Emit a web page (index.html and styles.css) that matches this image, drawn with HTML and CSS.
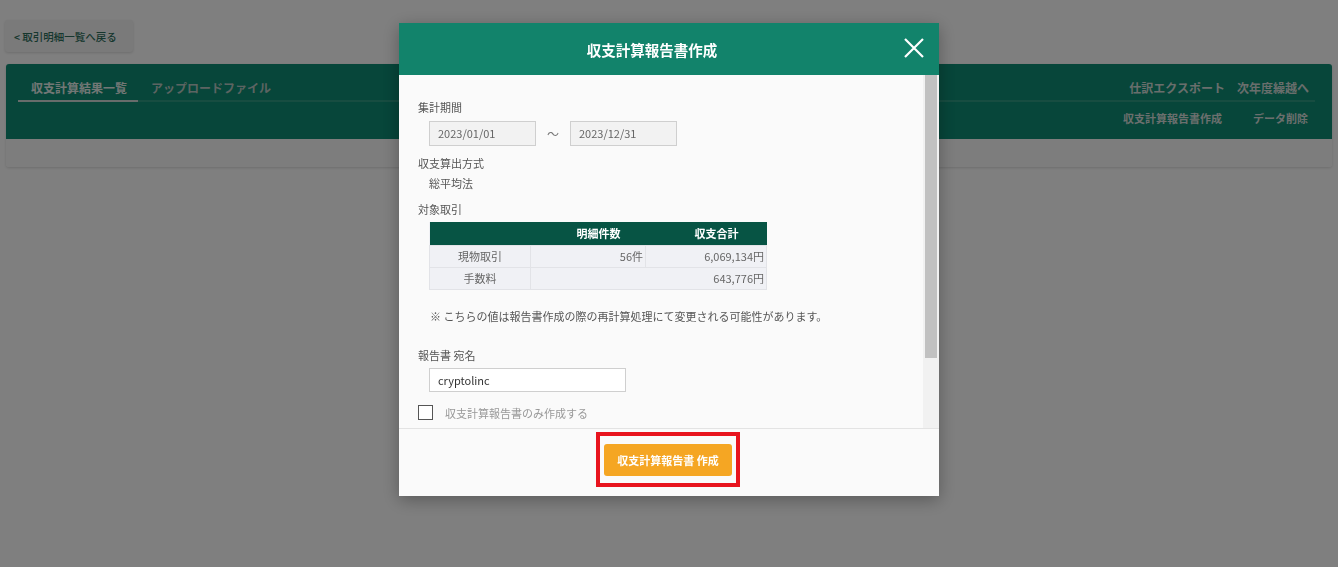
FILE: index.html
```html
<!DOCTYPE html>
<html lang="ja">
<head>
  <meta charset="UTF-8">
  <meta name="viewport" content="width=device-width, initial-scale=1.0">
  <title>収支計算報告書作成</title>
  <link rel="stylesheet" href="styles.css">
</head>
<body>

<div class="page">
  <button class="back-btn">&lt; 取引明細一覧へ戻る</button>

  <div class="card">
    <div class="card-head">
      <div class="tab-row">
        <div class="tabs">
          <span class="tab active">収支計算結果一覧</span>
          <span class="tab">アップロードファイル</span>
        </div>
        <div class="tab-links">
          <span>仕訳エクスポート</span>
          <span>次年度繰越へ</span>
        </div>
      </div>
      <div class="action-row">
        <span>収支計算報告書作成</span>
        <span class="del">データ削除</span>
      </div>
    </div>
    <div class="card-foot"></div>
  </div>
</div>

<div class="overlay"></div>

<div class="modal">
  <div class="modal-head">
    <h2>収支計算報告書作成</h2>
    <svg class="close" width="20" height="20" viewBox="0 0 20 20">
      <path d="M1 1 L19 19 M19 1 L1 19" stroke="#fff" stroke-width="2.2" fill="none"/>
    </svg>
  </div>

  <div class="modal-main">
    <div class="modal-body">
      <div class="label">集計期間</div>
      <div class="date-row">
        <div class="input date">2023/01/01</div>
        <span class="tilde">～</span>
        <div class="input date">2023/12/31</div>
      </div>

      <div class="label gap-9">収支算出方式</div>
      <div class="value">総平均法</div>

      <div class="label gap-10">対象取引</div>
      <table class="summary">
        <thead>
          <tr><th></th><th>明細件数</th><th>収支合計</th></tr>
        </thead>
        <tbody>
          <tr><td class="name">現物取引</td><td class="num">56件</td><td class="num">6,069,134円</td></tr>
          <tr><td class="name">手数料</td><td class="num" colspan="2">643,776円</td></tr>
        </tbody>
      </table>

      <p class="note">※ こちらの値は報告書作成の際の再計算処理にて変更される可能性があります。</p>

      <div class="label gap-23">報告書 宛名</div>
      <div class="input addressee">cryptolinc</div>

      <label class="check-row">
        <span class="checkbox"></span>
        <span>収支計算報告書のみ作成する</span>
      </label>
    </div>
    <div class="scrollbar"><div class="thumb"></div></div>
  </div>

  <div class="modal-foot">
    <div class="highlight">
      <button class="create-btn">収支計算報告書 作成</button>
    </div>
  </div>
</div>

</body>
</html>
```

FILE: styles.css
```css
* {
  box-sizing: border-box;
  margin: 0;
  padding: 0;
  font-family: "Noto Sans CJK JP", "Noto Sans", sans-serif;
}

body {
  background: #fff;
  color: #555;
  font-size: 11px;
  width: 1338px;
  height: 567px;
  overflow: hidden;
}

.page {
  padding: 20px 6px 0 6px;
}

.back-btn {
  display: block;
  width: 128px;
  height: 32px;
  margin-left: -1px;
  border: none;
  border-radius: 3px;
  background: #f4f4f4;
  box-shadow: 0 1px 3px rgba(0, 0, 0, 0.15);
  color: #2d6e5c;
  font-size: 10.5px;
  font-weight: 500;
  text-align: left;
  padding-left: 9px;
}

.card {
  margin-top: 12px;
  border-radius: 3px;
  overflow: hidden;
  box-shadow: 0 1px 3px rgba(0, 0, 0, 0.15);
}

.card-head {
  background: #0e8c74;
  height: 75px;
  padding: 14px 17px 0 12px;
}

.tab-row {
  display: flex;
  justify-content: space-between;
  border-bottom: 2px solid #2f9a83;
  height: 24px;
}

.tabs {
  display: flex;
}

.tab {
  padding: 0 12px 0 13px;
  font-size: 12px;
  font-weight: bold;
  color: #b9c9c4;
  line-height: 20px;
  white-space: nowrap;
}

.tab.active {
  color: #e4eeeb;
  border-bottom: 2px solid #cfd9d6;
  padding-right: 11px;
  margin-bottom: -2px;
}

.tab-links {
  display: flex;
  gap: 12px;
  font-size: 12px;
  font-weight: bold;
  color: #d2dcd9;
  line-height: 20px;
  padding-right: 6px;
}

.action-row {
  display: flex;
  justify-content: flex-end;
  gap: 31px;
  padding: 8px 7px 0 0;
  font-size: 11px;
  font-weight: bold;
  color: #d6dfdc;
}

.card-foot {
  height: 28px;
  background: #fafafa;
}

.overlay {
  position: fixed;
  inset: 0;
  background: rgba(0, 0, 0, 0.5);
}

/* modal */
.modal {
  position: fixed;
  left: 399px;
  top: 23px;
  width: 540px;
  background: #fafafa;
  box-shadow: 0 4px 16px rgba(0, 0, 0, 0.3);
}

.modal-head {
  height: 52px;
  background: #12836b;
  display: flex;
  align-items: center;
  justify-content: center;
  padding-right: 34px;
  position: relative;
}

.modal-head h2 {
  color: #fff;
  font-size: 14.5px;
  font-weight: bold;
}

.close {
  position: absolute;
  right: 15px;
  top: 15px;
}

.modal-main {
  display: flex;
  height: 353px;
}

.modal-body {
  flex: 1;
  padding: 24px 19px 0;
}

.scrollbar {
  width: 16px;
  background: #f1f1f1;
  padding: 0 2px 0 2px;
}

.thumb {
  height: 283px;
  background: #c1c1c1;
}

.label {
  line-height: 16px;
  color: #555;
}

.gap-9 { margin-top: 9px; }
.gap-10 { margin-top: 10px; }
.gap-23 { margin-top: 23px; }

.date-row {
  display: flex;
  align-items: center;
  margin: 6px 0 0 11px;
}

.input {
  height: 25px;
  border: 1px solid #cfcfcf;
  background: #f2f2f2;
  color: #666;
  line-height: 23px;
  padding-left: 8px;
}

.date {
  width: 107px;
}

.tilde {
  width: 34px;
  text-align: center;
  color: #777;
  font-size: 12px;
}

.value {
  margin: 4px 0 0 11px;
  line-height: 16px;
}

.summary {
  margin: 5px 0 0 11px;
  width: 338px;
  border-collapse: collapse;
  background: #f0f1f5;
}

.summary th {
  background: #075444;
  color: #fff;
  font-weight: bold;
  height: 23px;
  text-align: right;
  padding-right: 28px;
}

.summary th:first-child { width: 101px; }
.summary th:nth-child(2) { width: 115px; padding-right: 25px; }

.summary td {
  height: 22px;
  border: 1px solid #e2e3e7;
  color: #666;
}

.summary td.name {
  text-align: center;
}

.summary td.num {
  text-align: right;
  padding-right: 2px;
}

.note {
  margin: 18px 0 0 12px;
  line-height: 16px;
}

.addressee {
  width: 197px;
  height: 24px;
  margin: 5px 0 0 11px;
  background: #fff;
  color: #333;
}

.check-row {
  display: flex;
  align-items: center;
  gap: 12px;
  margin-top: 13px;
  color: #999;
}

.checkbox {
  width: 15px;
  height: 15px;
  border: 1px solid #555;
  background: #fff;
}

.modal-foot {
  border-top: 1px solid #e3e3e3;
  height: 68px;
  display: flex;
  justify-content: center;
  padding-top: 3px;
}

.highlight {
  height: 55px;
  border: 4px solid #e8141e;
  padding: 8px 4px 0;
  margin-left: -2px;
}

.create-btn {
  width: 128px;
  height: 32px;
  border: none;
  border-radius: 3px;
  background: #f5a623;
  color: #fff;
  font-size: 11px;
  font-weight: bold;
}
```
